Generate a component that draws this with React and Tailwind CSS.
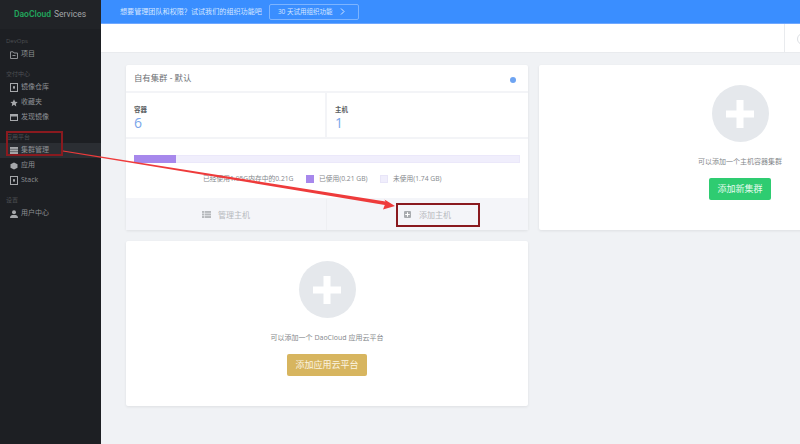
const sans = "font-['Open_Sans','Noto_Sans_CJK_SC',sans-serif]";

const Ic = {
  folder: <svg width="8" height="8" viewBox="0 0 8 8" fill="none" stroke="#8d9094" strokeWidth="1"><path d="M.5 2V7.500h7V2H4L3.200.8H.5z" /><path d="M2.500 4.500h3" /></svg>,
  box: <svg width="8" height="9" viewBox="0 0 8 9" fill="none"><rect x="0.500" y="0.500" width="7" height="8" stroke="#a6a8ab" /><rect x="3" y="3.200" width="2" height="2.400" fill="#a6a8ab" /></svg>,
  star: <svg width="8" height="8" viewBox="0 0 12 12" fill="#a6a8ab"><path d="M6 .5l1.700 3.600 3.800.5-2.800 2.700.7 3.900L6 8.800l-3.400 1.900.7-3.900L.5 4.600l3.800-.5z" /></svg>,
  win: <svg width="8" height="7" viewBox="0 0 8 7"><rect x="0.500" y="0.500" width="7" height="6" fill="none" stroke="#a6a8ab" /><rect x="0.500" y="0.500" width="7" height="2" fill="#a6a8ab" /></svg>,
  grid: <svg width="8" height="7" viewBox="0 0 8 7" fill="#a6a8ab"><rect width="8" height="7" /><path d="M0 2.300h8M0 4.600h8" stroke="#2b2e33" strokeWidth="0.500" /></svg>,
  footGrid: <svg width="9" height="7" viewBox="0 0 9 7" fill="#b6b9bd"><rect width="9" height="7" /><path d="M0 2.300h9M0 4.600h9M2.500 0v7" stroke="#f4f5f9" strokeWidth="0.600" /></svg>,
  app: <svg width="8" height="8" viewBox="0 0 8 8" fill="#a6a8ab"><path d="M4 .5L7.500 2.300v3.400L4 7.500.5 5.700V2.300z" /></svg>,
  user: <svg width="8" height="8" viewBox="0 0 8 8" fill="#a6a8ab"><circle cx="4" cy="2.300" r="2" /><path d="M0 8c0-2.500 1.500-3 4-3s4 .5 4 3z" /></svg>,
};

function NavItem({ icon, label, active }) {
  return (
    <div className={`flex h-[15px] items-center gap-[3px] pl-[10px] text-[7px] text-[#8d9094] ${active ? "bg-[#2b2e33]" : ""}`}>
      <span className="flex w-[8px] justify-center">{icon}</span>
      <span>{label}</span>
    </div>
  );
}

function Group({ title, children, cls }) {
  return (
    <div className={cls}>
      <div className="h-[11px] pl-[6px] text-[6px] leading-[11px] text-[#4d5054]">{title}</div>
      <div>{children}</div>
    </div>
  );
}

function Plus() {
  return (
    <div className="flex h-[57px] w-[57px] items-center justify-center rounded-full bg-[#e5e8ec]">
      <svg width="28" height="28" viewBox="0 0 28 28" fill="#fff"><rect x="10.500" y="0" width="7" height="28" /><rect x="0" y="10.500" width="28" height="7" /></svg>
    </div>
  );
}

export default function App() {
  return (
    <div className={`relative flex h-[444px] w-[800px] overflow-hidden bg-[#f0f2f5] ${sans}`}>
      <aside className="flex h-full w-[101px] shrink-0 flex-col bg-[#1d1f23]">
        <div className="flex h-[29px] items-center bg-[#212327] pl-[14px] font-['Roboto',sans-serif] text-[8.500px]">
          <span className="font-semibold text-[#22a55c]">DaoCloud</span>
          <span className="ml-[3px] text-[#a3a6a9]">Services</span>
        </div>
        <Group title="DevOps" cls="mt-[7px]"><NavItem icon={Ic.folder} label="项目" /></Group>
        <Group title="交付中心" cls="mt-[7px]">
          <NavItem icon={Ic.box} label="镜像仓库" />
          <NavItem icon={Ic.star} label="收藏夹" />
          <NavItem icon={Ic.win} label="发现镜像" />
        </Group>
        <Group title="应用平台" cls="mt-[7px]">
          <NavItem icon={Ic.grid} label="集群管理" active />
          <NavItem icon={Ic.app} label="应用" />
          <NavItem icon={Ic.box} label="Stack" />
        </Group>
        <Group title="设置" cls="mt-[7px]"><NavItem icon={Ic.user} label="用户中心" /></Group>
      </aside>

      <main className="flex min-w-0 flex-1 flex-col">
        <div className="flex h-[24px] items-center border-b border-[#6fa8ff] bg-[#3a8eff] pl-[19px] text-[7.100px] text-[#d5e6ff]">
          <span>想要管理团队和权限？试试我们的组织功能吧</span>
          <span className="ml-[7px] flex h-[16px] w-[90px] items-center rounded-[2px] border border-[#7db4ff] pl-[8px] text-[6.500px] text-[#d5e6ff]">
            <span>30 天试用组织功能</span>
            <svg className="ml-[7px]" width="5" height="7" viewBox="0 0 5 7" fill="none" stroke="#d5e6ff"><path d="M1 .5l3 3-3 3" /></svg>
          </span>
        </div>
        <div className="flex h-[29px] justify-end border-b border-[#e9ebee] bg-white">
          <div className="w-[16px] border-l border-[#e9ebee] pl-[12px] pt-[9px]">
            <div className="h-[12px] w-[12px] rounded-full border border-[#dcdfe3]" />
          </div>
        </div>

        <div className="flex items-start gap-[11px] pl-[25px] pt-[12px]">
          <div className="flex w-[402px] shrink-0 flex-col gap-[11px]">
            <section className="h-[165px] rounded-[2px] bg-white shadow-[0_1px_3px_rgba(0,0,0,0.08)]">
              <div className="flex h-[28px] items-center justify-between border-b-2 border-[#f3f4f7] pl-[8px] pr-[12px] pt-[1px] text-[8.400px] text-[#6d7074]">
                <span>自有集群 - 默认</span>
                <span className="mt-[3px] h-[6px] w-[6px] rounded-full bg-[#6ea4f2]" />
              </div>
              <div className="flex h-[46px] border-b-2 border-[#f3f4f7]">
                <div className="w-[201px] border-r-2 border-[#f3f4f7] pl-[8px] pt-[11px]">
                  <div className="text-[6.500px] font-semibold leading-[11px] text-[#5c5f63]">容器</div>
                  <div className="text-[14px] leading-[15px] text-[#79a5ea]">6</div>
                </div>
                <div className="flex-1 pl-[8px] pt-[11px]">
                  <div className="text-[6.500px] font-semibold leading-[11px] text-[#5c5f63]">主机</div>
                  <div className="text-[14px] leading-[15px] text-[#79a5ea]">1</div>
                </div>
              </div>
              <div className="h-[59px] px-[8px] pt-[16px]">
                <div className="h-[8px] w-full border border-[#ebe8fa] bg-[#f0eefc]">
                  <div className="-m-[1px] h-[8px] w-[42px] bg-[#a788ec]" />
                </div>
                <div className="mt-[11px] flex h-[10px] items-center pl-[69px] text-[6.750px] text-[#85888c]">
                  <span className="w-[91px] whitespace-nowrap">已经使用1.95G内存中的0.21G</span>
                  <span className="ml-[12px] h-[8px] w-[8px] bg-[#a788ec]" />
                  <span className="ml-[5px] w-[49px] whitespace-nowrap">已使用(0.21 GB)</span>
                  <span className="ml-[12px] h-[8px] w-[8px] border border-[#e8e5f8] bg-[#f0eefc]" />
                  <span className="ml-[5px] whitespace-nowrap">未使用(1.74 GB)</span>
                </div>
              </div>
              <div className="flex h-[32px] bg-[#f4f5f9] pt-[1px] text-[8px] text-[#b6b9bd]">
                <div className="flex w-[201px] items-center justify-center gap-[7px] border-r border-[#eeeff3]">
                  {Ic.footGrid}
                  <span>管理主机</span>
                </div>
                <div className="flex flex-1 items-center justify-center gap-[8px]">
                  <svg width="7" height="7" viewBox="0 0 7 7"><rect width="7" height="7" rx="1" fill="#a9acb0" /><path d="M3.500 1.200v4.600M1.200 3.500h4.600" stroke="#fff" /></svg>
                  <span>添加主机</span>
                </div>
              </div>
            </section>

            <section className="flex h-[165px] flex-col items-center rounded-[2px] bg-white pt-[20px] shadow-[0_1px_3px_rgba(0,0,0,0.08)]">
              <Plus />
              <div className="mt-[14px] text-[7px] leading-[12px] text-[#85888c]">可以添加一个 DaoCloud 应用云平台</div>
              <div className="mt-[10px] flex h-[22px] w-[80px] items-center justify-center rounded-[2px] bg-[#d7b55f] text-[9px] text-[#fbf4e2]">添加应用云平台</div>
            </section>
          </div>

          <section className="flex h-[165px] w-[402px] shrink-0 flex-col items-center rounded-[2px] bg-white pt-[20px] shadow-[0_1px_3px_rgba(0,0,0,0.08)]">
            <Plus />
            <div className="mt-[14px] text-[7px] leading-[12px] text-[#85888c]">可以添加一个主机容器集群</div>
            <div className="mt-[10px] flex h-[22px] w-[62px] items-center justify-center rounded-[2px] bg-[#2ecc71] text-[9px] text-[#e6fbef]">添加新集群</div>
          </section>
        </div>
      </main>

      <svg className="pointer-events-none absolute left-0 top-0" width="800" height="444" viewBox="0 0 800 444">
        <path d="M63 150.500 L385.500 201.500 L384.500 199.500 L395 206 L383 209.500 L384.800 205 L63 151.500 z" fill="#ee3b3b" />
      </svg>
      <div className="pointer-events-none absolute left-[6px] top-[131px] h-[25px] w-[57px] border-2 border-[#8a1a1f]" />
      <div className="pointer-events-none absolute left-[396px] top-[203px] h-[24px] w-[84px] border-2 border-[#8a1a1f]" />
    </div>
  );
}
